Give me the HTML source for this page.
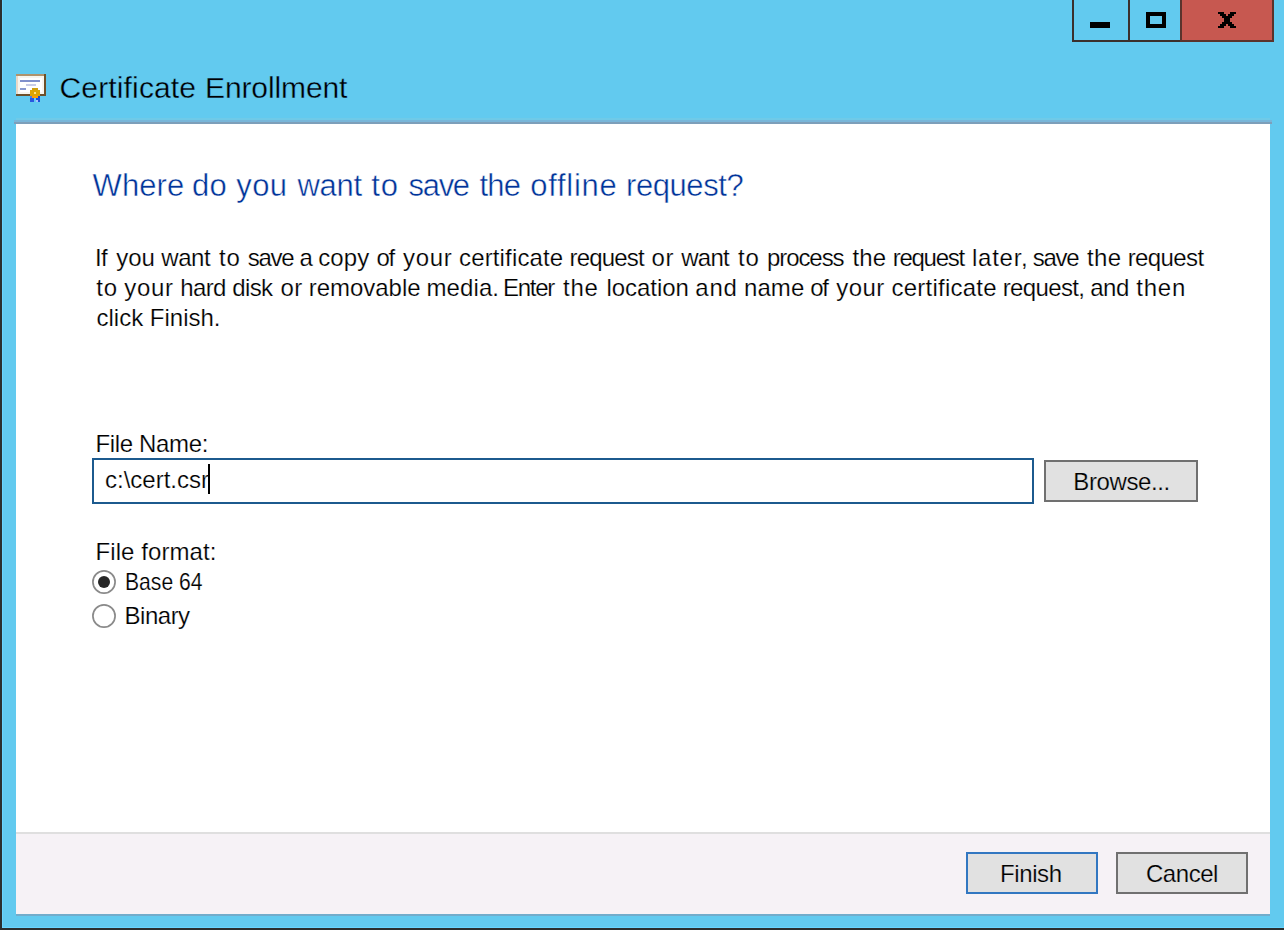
<!DOCTYPE html>
<html lang="en">
<head>
<meta charset="utf-8">
<title>Certificate Enrollment</title>
<style>
  html, body { margin: 0; padding: 0; }
  body {
    width: 1284px; height: 930px; overflow: hidden; position: relative;
    background: #62caef;
    font-family: "Liberation Sans", sans-serif;
    color: #000;
  }
  .abs { position: absolute; }
  .t { position: absolute; white-space: nowrap; line-height: 1; margin: 0; padding: 0; }
  /* window frame */
  #bl { left: 0; top: 0; width: 2px; height: 930px; background: #2b2f2e; }
  #bl2 { left: 2px; top: 0; width: 1px; height: 928px; background: #6ad5ff; }
  #bb { left: 0; top: 928px; width: 1284px; height: 2px; background: #2b2f2e; }
  #bb2 { left: 3px; top: 927px; width: 1281px; height: 1px; background: #6ad5ff; }
  /* caption buttons */
  #caps { left: 1072px; top: -2px; width: 198px; height: 40px; border: 2px solid #3b302d; }
  #cap-div1 { left: 1128px; top: 0; width: 2px; height: 40px; background: #3b302d; }
  #cap-close { left: 1180px; top: 0; width: 92px; height: 40px; background: #c75850; }
  #cap-div2 { left: 1180px; top: 0; width: 2px; height: 40px; background: #5a332c; }
  #cap-r { left: 1272px; top: 0; width: 2px; height: 42px; background: #5a332c; }
  #cap-b { left: 1180px; top: 40px; width: 94px; height: 2px; background: #5a332c; }
  #min { left: 1090px; top: 22px; width: 20px; height: 6px; background: #000; }
  #max { left: 1146px; top: 12px; width: 12px; height: 8px; border: 4px solid #000; }
  /* title */
  .tt { font-size: 30px; color: #000; -webkit-text-stroke: 0.35px #62caef; }
  /* client */
  #sh1 { left: 16px; top: 118px; width: 1254px; height: 2px; background: #6fcae8; }
  #sh2 { left: 14px; top: 120px; width: 1258px; height: 2px; background: #78b6d9; }
  #sh3 { left: 14px; top: 122px; width: 1258px; height: 2px; background: #7d9fba; }
  #client { left: 16px; top: 124px; width: 1254px; height: 708px; background: #fff; }
  #sep { left: 16px; top: 832px; width: 1254px; height: 2px; background: #dfdfdf; }
  #footer { left: 16px; top: 834px; width: 1254px; height: 80px; background: #f6f2f6; }
  #sh4 { left: 16px; top: 914px; width: 1254px; height: 2px; background: #72accb; }
    .p { font-size: 24px; color: #000; -webkit-text-stroke: 0.2px #fff; }
  .p.onbtn { -webkit-text-stroke-color: #e1e1e1; }
  .w { position: absolute; top: 0; white-space: nowrap; }
  .hd { font-size: 31px; color: #003399; -webkit-text-stroke: 0.45px #fff; }
  #input { left: 92px; top: 458px; width: 938px; height: 42px; border: 2px solid #1c5a8e; background: #fff; }
  #caret { left: 208px; top: 464px; width: 2px; height: 30px; background: #000; }
  .btn { position: absolute; box-sizing: border-box; border: 2px solid #707070; background: #e1e1e1; }
  .btn.def { border-color: #3277c1; }
</style>
</head>
<body>
  <div class="abs" id="bl"></div>
  <div class="abs" id="bl2"></div>
  <div class="abs" id="bb2"></div>
  <div class="abs" id="bb"></div>

  <div class="abs" id="caps"></div>
  <div class="abs" id="cap-div1"></div>
  <div class="abs" id="cap-close"></div>
  <div class="abs" id="cap-div2"></div>
  <div class="abs" id="cap-r"></div>
  <div class="abs" id="cap-b"></div>
  <div class="abs" id="min"></div>
  <div class="abs" id="max"></div>
  <svg class="abs" id="closex" style="left:1218px;top:12px" width="18" height="16" viewBox="0 0 9 8" shape-rendering="crispEdges" fill="#000">
    <rect x="0" y="0" width="3" height="1"/><rect x="6" y="0" width="3" height="1"/>
    <rect x="1" y="1" width="3" height="1"/><rect x="5" y="1" width="3" height="1"/>
    <rect x="2" y="2" width="5" height="1"/>
    <rect x="3" y="3" width="3" height="2"/>
    <rect x="2" y="5" width="5" height="1"/>
    <rect x="1" y="6" width="3" height="1"/><rect x="5" y="6" width="3" height="1"/>
    <rect x="0" y="7" width="3" height="1"/><rect x="6" y="7" width="3" height="1"/>
  </svg>

  <svg class="abs" id="icon" style="left:16px;top:74px" width="30" height="28" viewBox="0 0 15 14" shape-rendering="crispEdges">
    <rect x="0" y="0" width="14" height="1" fill="#b0936b"/>
    <rect x="0" y="1" width="1" height="9" fill="#ead9c8"/>
    <rect x="1" y="1" width="13" height="9" fill="#f8f5ee"/>
    <rect x="2" y="2" width="11" height="7" fill="#ffffff"/>
    <rect x="14" y="0" width="1" height="11" fill="#6e5028"/>
    <rect x="0" y="10" width="15" height="1" fill="#6e4f2a"/>
    <rect x="2" y="3" width="10" height="1" fill="#8090cc"/>
    <rect x="5" y="5" width="5" height="1" fill="#c8cce8"/>
    <rect x="2" y="7" width="3" height="1" fill="#8898d0"/>
    <rect x="8" y="7" width="3" height="1" fill="#d0a010"/>
    <rect x="7" y="8" width="5" height="3" fill="#dca400"/>
    <rect x="9" y="9" width="1" height="1" fill="#ffe27a"/>
    <rect x="8" y="11" width="3" height="1" fill="#ff9a00"/>
    <rect x="7" y="11" width="1" height="1" fill="#4a80e0"/>
    <rect x="11" y="11" width="1" height="1" fill="#1848c8"/>
    <rect x="7" y="12" width="2" height="2" fill="#2858e0"/>
    <rect x="10" y="12" width="2" height="2" fill="#1c50d8"/>
    <rect x="10" y="13" width="1" height="1" fill="#a8c0ff"/>
  </svg>
  <div class="t tt" id="title" style="left:0;top:73px;width:1284px"><span class="w" style="left:59.50px;letter-spacing:0.15px">Certificate</span> <span class="w" style="left:205.00px;letter-spacing:-0.11px">Enrollment</span></div>

  <div class="abs" id="sh1"></div>
  <div class="abs" id="sh2"></div>
  <div class="abs" id="sh3"></div>
  <div class="abs" id="client"></div>
  <div class="abs" id="sep"></div>
  <div class="abs" id="footer"></div>
  <div class="abs" id="sh4"></div>

  <div class="t hd" id="head" style="left:0;top:170px;width:1284px"><span class="w" style="left:92.50px;letter-spacing:0.12px">Where</span> <span class="w" style="left:192.00px;letter-spacing:0.25px">do</span> <span class="w" style="left:236.25px;letter-spacing:0.38px">you</span> <span class="w" style="left:297.50px;letter-spacing:-0.33px">want</span> <span class="w" style="left:371.25px;letter-spacing:0.80px">to</span> <span class="w" style="left:408.50px;letter-spacing:-1.30px">save</span> <span class="w" style="left:479.50px;letter-spacing:-0.75px">the</span> <span class="w" style="left:530.25px;letter-spacing:0.71px">offline</span> <span class="w" style="left:626.00px;letter-spacing:-0.43px">request?</span></div>

  <div class="t p" id="p1" style="left:0;top:246px;width:1284px"><span class="w" style="left:95.00px;letter-spacing:-0.75px">If</span> <span class="w" style="left:116.25px;letter-spacing:0.00px">you</span> <span class="w" style="left:161.25px;letter-spacing:-0.42px">want</span> <span class="w" style="left:219.00px;letter-spacing:0.80px">to</span> <span class="w" style="left:247.80px;letter-spacing:-1.30px">save</span> <span class="w" style="left:299.60px;letter-spacing:0.00px">a</span> <span class="w" style="left:318.20px;letter-spacing:0.10px">copy</span> <span class="w" style="left:376.50px;letter-spacing:-1.30px">of</span> <span class="w" style="left:403.00px;letter-spacing:0.67px">your</span> <span class="w" style="left:459.00px;letter-spacing:0.15px">certificate</span> <span class="w" style="left:569.50px;letter-spacing:-0.83px">request</span> <span class="w" style="left:651.50px;letter-spacing:0.75px">or</span> <span class="w" style="left:681.25px;letter-spacing:-0.75px">want</span> <span class="w" style="left:738.00px;letter-spacing:0.80px">to</span> <span class="w" style="left:767.00px;letter-spacing:-1.08px">process</span> <span class="w" style="left:852.50px;letter-spacing:0.12px">the</span> <span class="w" style="left:892.75px;letter-spacing:-1.29px">request</span> <span class="w" style="left:972.00px;letter-spacing:0.75px">later,</span> <span class="w" style="left:1032.75px;letter-spacing:-1.25px">save</span> <span class="w" style="left:1087.00px;letter-spacing:0.38px">the</span> <span class="w" style="left:1127.75px;letter-spacing:-0.62px">request</span></div>
  <div class="t p" id="p2" style="left:0;top:276px;width:1284px"><span class="w" style="left:96.25px;letter-spacing:0.80px">to</span> <span class="w" style="left:124.25px;letter-spacing:0.67px">your</span> <span class="w" style="left:180.25px;letter-spacing:-0.65px">hard</span> <span class="w" style="left:232.30px;letter-spacing:-0.63px">disk</span> <span class="w" style="left:280.40px;letter-spacing:0.40px">or</span> <span class="w" style="left:308.80px;letter-spacing:-0.04px">removable</span> <span class="w" style="left:426.50px;letter-spacing:0.10px">media.</span> <span class="w" style="left:503.00px;letter-spacing:-1.25px">Enter</span> <span class="w" style="left:563.00px;letter-spacing:0.80px">the</span> <span class="w" style="left:606.50px;letter-spacing:-0.04px">location</span> <span class="w" style="left:695.25px;letter-spacing:0.80px">and</span> <span class="w" style="left:744.00px;letter-spacing:0.08px">name</span> <span class="w" style="left:810.25px;letter-spacing:-1.30px">of</span> <span class="w" style="left:836.25px;letter-spacing:0.42px">your</span> <span class="w" style="left:891.50px;letter-spacing:0.23px">certificate</span> <span class="w" style="left:1002.75px;letter-spacing:-0.64px">request,</span> <span class="w" style="left:1090.25px;letter-spacing:-0.50px">and</span> <span class="w" style="left:1136.25px;letter-spacing:0.80px">then</span></div>
  <div class="t p" id="p3" style="left:96.5px;top:306px">click Finish.</div>

  <div class="t p" id="lfn" style="left:95.5px;top:432px;letter-spacing:-0.35px">File Name:</div>
  <div class="abs" id="input"></div>
  <div class="t p" id="fn" style="left:105px;top:468px">c:\cert.csr</div>
  <div class="abs" id="caret"></div>
  <div class="btn" style="left:1044px;top:460px;width:154px;height:42px"></div>
  <div class="t p onbtn" id="browse" style="left:1073.3px;top:470px;letter-spacing:-0.4px">Browse...</div>

  <div class="t p" id="lff" style="left:95.5px;top:540px;letter-spacing:0.08px">File format:</div>
  <svg class="abs" style="left:92px;top:570px" width="24" height="24" viewBox="0 0 24 24"><circle cx="12" cy="12" r="11.1" fill="#fff" stroke="#8a8a8a" stroke-width="1.7"/><circle cx="12" cy="12" r="6" fill="#262626"/></svg>
  <div class="t p" id="b64" style="left:124.7px;top:570px;transform:scaleX(0.88);transform-origin:0 0">Base 64</div>
  <svg class="abs" style="left:92px;top:604px" width="24" height="24" viewBox="0 0 24 24"><circle cx="12" cy="12" r="11.1" fill="#fff" stroke="#8a8a8a" stroke-width="1.7"/></svg>
  <div class="t p" id="bin" style="left:124.6px;top:604px;letter-spacing:-0.5px">Binary</div>

  <div class="btn def" style="left:966px;top:852px;width:132px;height:42px"></div>
  <div class="t p onbtn" id="finish" style="left:1000px;top:862px;letter-spacing:-0.4px">Finish</div>
  <div class="btn" style="left:1116px;top:852px;width:132px;height:42px"></div>
  <div class="t p onbtn" id="cancel" style="left:1146px;top:862px;letter-spacing:-0.46px">Cancel</div>
</body>
</html>
